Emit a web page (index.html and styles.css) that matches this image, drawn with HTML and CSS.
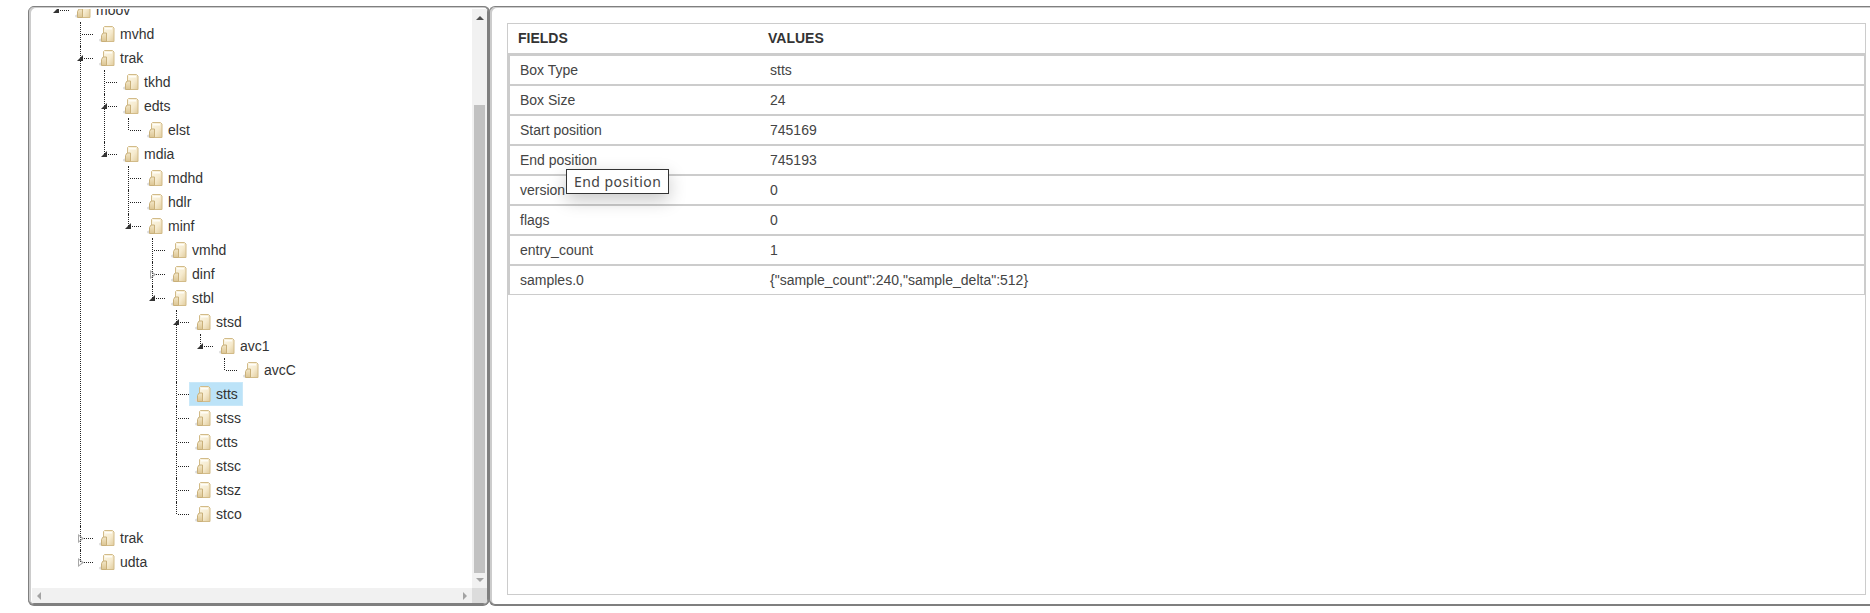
FILE: index.html
```html
<!DOCTYPE html>
<html lang="en">
<head>
<meta charset="utf-8">
<title>MP4 box viewer</title>
<link rel="stylesheet" href="styles.css">
</head>
<body>
<svg class="defs" width="0" height="0" aria-hidden="true">
  <defs>
    <linearGradient id="pg" x1="0" y1="0" x2="1" y2="1">
      <stop offset="0" stop-color="#fbf6e6"/>
      <stop offset="0.55" stop-color="#f6ebcf"/>
      <stop offset="1" stop-color="#e0cb9c"/>
    </linearGradient>
    <linearGradient id="fg" x1="0" y1="0" x2="0" y2="1">
      <stop offset="0" stop-color="#f3e7c8"/>
      <stop offset="1" stop-color="#dcc592"/>
    </linearGradient>
    <symbol id="box" viewBox="0 0 16 16">
      <ellipse cx="1.800" cy="14" rx="1.800" ry="1.500" fill="#dcdcdc"/>
      <path d="M4.500 1.500l1-1h8l1.500 1.500v13.500h-10.500z" fill="url(#pg)" stroke="#d2bb88"/>
      <path d="M6 2h7v1.500h-7z" fill="#fffdf6"/>
      <path d="M2.500 9.500l1.500-2.500h3.500v8.500h-5z" fill="url(#fg)" stroke="#c9b07a"/>
    </symbol>
  </defs>
</svg>
<main class="app">
  <section class="panel tree-panel">
    <div class="tree-view">
      <ul class="tree root">
        <li class="open last"><div class="row"><a class="node"><svg class="ico"><use href="#box"/></svg>moov</a></div>
          <ul class="tree">
            <li><div class="row"><a class="node"><svg class="ico"><use href="#box"/></svg>mvhd</a></div></li>
            <li class="open"><div class="row"><a class="node"><svg class="ico"><use href="#box"/></svg>trak</a></div>
              <ul class="tree">
                <li><div class="row"><a class="node"><svg class="ico"><use href="#box"/></svg>tkhd</a></div></li>
                <li class="open"><div class="row"><a class="node"><svg class="ico"><use href="#box"/></svg>edts</a></div>
                  <ul class="tree">
                    <li><div class="row"><a class="node"><svg class="ico"><use href="#box"/></svg>elst</a></div></li>
                  </ul>
                </li>
                <li class="open"><div class="row"><a class="node"><svg class="ico"><use href="#box"/></svg>mdia</a></div>
                  <ul class="tree">
                    <li><div class="row"><a class="node"><svg class="ico"><use href="#box"/></svg>mdhd</a></div></li>
                    <li><div class="row"><a class="node"><svg class="ico"><use href="#box"/></svg>hdlr</a></div></li>
                    <li class="open"><div class="row"><a class="node"><svg class="ico"><use href="#box"/></svg>minf</a></div>
                      <ul class="tree">
                        <li><div class="row"><a class="node"><svg class="ico"><use href="#box"/></svg>vmhd</a></div></li>
                        <li class="closed"><div class="row"><a class="node"><svg class="ico"><use href="#box"/></svg>dinf</a></div></li>
                        <li class="open"><div class="row"><a class="node"><svg class="ico"><use href="#box"/></svg>stbl</a></div>
                          <ul class="tree">
                            <li class="open"><div class="row"><a class="node"><svg class="ico"><use href="#box"/></svg>stsd</a></div>
                              <ul class="tree">
                                <li class="open"><div class="row"><a class="node"><svg class="ico"><use href="#box"/></svg>avc1</a></div>
                                  <ul class="tree">
                                    <li><div class="row"><a class="node"><svg class="ico"><use href="#box"/></svg>avcC</a></div></li>
                                  </ul>
                                </li>
                              </ul>
                            </li>
                            <li><div class="row"><a class="node selected"><svg class="ico"><use href="#box"/></svg>stts</a></div></li>
                            <li><div class="row"><a class="node"><svg class="ico"><use href="#box"/></svg>stss</a></div></li>
                            <li><div class="row"><a class="node"><svg class="ico"><use href="#box"/></svg>ctts</a></div></li>
                            <li><div class="row"><a class="node"><svg class="ico"><use href="#box"/></svg>stsc</a></div></li>
                            <li><div class="row"><a class="node"><svg class="ico"><use href="#box"/></svg>stsz</a></div></li>
                            <li><div class="row"><a class="node"><svg class="ico"><use href="#box"/></svg>stco</a></div></li>
                          </ul>
                        </li>
                      </ul>
                    </li>
                  </ul>
                </li>
              </ul>
            </li>
            <li class="closed"><div class="row"><a class="node"><svg class="ico"><use href="#box"/></svg>trak</a></div></li>
            <li class="closed"><div class="row"><a class="node"><svg class="ico"><use href="#box"/></svg>udta</a></div></li>
          </ul>
        </li>
      </ul>
    </div>
    <div class="vbar"><span class="arrow up"></span><div class="vtrack"><div class="vthumb"></div></div><span class="arrow down"></span></div>
    <div class="hbar"><span class="arrow left"></span><span class="arrow right"></span></div>
    <div class="corner"></div>
  </section>
  <section class="panel detail-panel">
    <div class="grid-box">
      <div class="grid-head"><div class="col-f">FIELDS</div><div class="col-v">VALUES</div></div>
      <div class="grid-row"><div class="col-f">Box Type</div><div class="col-v">stts</div></div>
      <div class="grid-row"><div class="col-f">Box Size</div><div class="col-v">24</div></div>
      <div class="grid-row"><div class="col-f">Start position</div><div class="col-v">745169</div></div>
      <div class="grid-row"><div class="col-f">End position</div><div class="col-v">745193</div></div>
      <div class="grid-row"><div class="col-f">version</div><div class="col-v">0</div></div>
      <div class="grid-row"><div class="col-f">flags</div><div class="col-v">0</div></div>
      <div class="grid-row"><div class="col-f">entry_count</div><div class="col-v">1</div></div>
      <div class="grid-row last-row"><div class="col-f">samples.0</div><div class="col-v">{"sample_count":240,"sample_delta":512}</div></div>
      <div class="tooltip">End position</div>
    </div>
  </section>
</main>
</body>
</html>
```

FILE: styles.css
```css
* { box-sizing: border-box; }
html, body { margin: 0; height: 100%; background: #fff; overflow: hidden; }
body { font-family: "Liberation Sans", Arial, sans-serif; font-size: 14px; color: #333; }
.defs { position: absolute; }

.app { display: flex; height: 613px; padding: 6px 0 8px 28px; }

.panel {
  background: #fff;
  border: 1px solid #7f7f7f;
  border-radius: 6px;
  overflow: hidden;
}
.tree-panel {
  width: 461px;
  flex: none;
  display: grid;
  grid-template-columns: 1fr 15px;
  grid-template-rows: 1fr 15px;
  padding: 2px 1px 1px 3px;
  box-shadow: inset 2px 1px 0 #ccc, inset -1px -1px 0 #7f7f7f, 0 1px 0 #7f7f7f, 1px 0 0 #7f7f7f;
}
.detail-panel {
  flex: 1;
  padding: 16px 5px 9px 17px;
  margin-right: -1px;
  border-right: 0;
  border-top-right-radius: 0;
  border-bottom-right-radius: 0;
  box-shadow: inset 2px 1px 0 #ccc, 0 1px 0 #7f7f7f;
}

/* tree */
.tree-view { overflow: hidden; padding-left: 24px; }
.tree { list-style: none; margin: 0; padding: 0; }
.root { margin-top: -11px; }
.tree .tree { margin-left: 24px; }
.tree li { position: relative; }
.row { height: 24px; display: flex; align-items: center; padding-left: 13px; position: relative; }
.tree .tree > li::before {
  content: "";
  position: absolute;
  left: 0; top: 0; bottom: 0;
  border-left: 1px dotted #222;
}
.tree .tree > li:last-child::before { bottom: auto; height: 12px; }
.row::before {
  content: "";
  position: absolute;
  left: 2px; top: 12px;
  width: 11px;
  border-top: 1px dotted #222;
}
.open > .row::after {
  content: "";
  position: absolute;
  left: -3px; top: 9px;
  width: 0; height: 0;
  border-style: solid;
  border-width: 0 0 6px 6px;
  border-color: transparent transparent #333 transparent;
}
.closed > .row::after {
  content: "";
  position: absolute;
  left: -2px; top: 8px;
  width: 6px; height: 9px;
  background: #a8a8a8;
  clip-path: polygon(evenodd, 0 0, 100% 50%, 0 100%, 0 0, 1px 2px, 1px 7px, 4px 4.500px, 1px 2px);
}
.node {
  display: inline-flex;
  align-items: center;
  gap: 5px;
  height: 24px;
  padding: 0 5px 0 6px;
  color: #333;
  position: relative;
  z-index: 1;
  white-space: nowrap;
}
.node.selected { background: #bce3f8; box-shadow: inset 0 0 0 1px #c9e8f9; border-radius: 1px; }
.ico { width: 16px; height: 16px; display: block; }

/* scrollbars */
.vbar { background: #f1f1f1; display: flex; flex-direction: column; align-items: center; }
.vtrack { flex: 1; width: 100%; padding: 85px 2px 5px 2px; display: flex; }
.vthumb { flex: 1; background: #c1c1c1; }
.hbar { background: #f1f1f1; display: flex; align-items: center; justify-content: space-between; padding: 0 5px; }
.corner { background: #dcdcdc; }
.arrow { display: block; width: 0; height: 0; border-style: solid; flex: none; }
.arrow.up { margin: 7px 0 0; border-width: 0 4px 4px 4px; border-color: transparent transparent #505050 transparent; }
.arrow.down { margin: 0 0 6px; border-width: 4px 4px 0 4px; border-color: #a3a3a3 transparent transparent transparent; }
.arrow.left { border-width: 4px 4px 4px 0; border-color: transparent #a3a3a3 transparent transparent; }
.arrow.right { border-width: 4px 0 4px 4px; border-color: transparent transparent transparent #a3a3a3; }

/* grid */
.grid-box { position: relative; height: 100%; border: 1px solid #ccc; }
.grid-head {
  display: flex;
  height: 32px;
  align-items: center;
  font-weight: 700;
  border-bottom: 3px solid #ccc;
  padding: 0 0 2px 10px;
}
.grid-head .col-f { width: 250px; }
.grid-row {
  display: flex;
  height: 30px;
  align-items: center;
  padding-left: 10px;
  margin: 0 -1px;
  border-left: 3px solid #ccc;
  border-right: 2px solid #ccc;
  border-bottom: 2px solid #ccc;
  color: #444;
}
.grid-row.last-row { height: 29px; border-bottom-width: 1px; }
.grid-row .col-f { width: 250px; }

.tooltip {
  position: absolute;
  left: 58px;
  top: 145px;
  height: 25px;
  padding: 0 7px;
  display: flex;
  align-items: center;
  background: #fff;
  border: 1px solid #333;
  color: #444;
  font-family: "Noto Sans", sans-serif;
  font-size: 14px;
  letter-spacing: 0.45px;
  box-shadow: 0 6px 18px rgba(0,0,0,0.22);
}
```
